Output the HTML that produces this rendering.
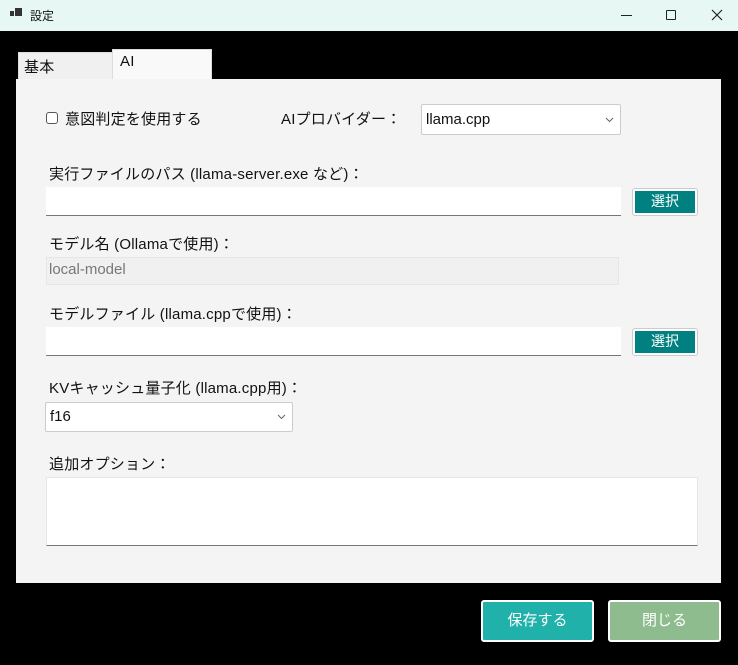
<!DOCTYPE html>
<html><head><meta charset="utf-8"><style>
*{margin:0;padding:0;box-sizing:border-box}
body{width:738px;height:665px;background:#000;position:relative;overflow:hidden;font-family:"Liberation Sans","Noto Sans CJK JP",sans-serif;color:#111}
.a{position:absolute;white-space:nowrap}
.t{font-size:15px;letter-spacing:0.2px}
.in{position:absolute;background:#fff;border-bottom:1px solid #777}
.btn{position:absolute;background:#008080;color:#fff;font-size:14px;text-align:center;border:2px solid #fff;box-shadow:0 0 0 1px #ccc;border-radius:2px;line-height:20px}
.cb{position:absolute;background:#fff;border:1px solid #ccc;border-radius:2px;font-size:15px;padding-left:4px}
.cb svg{position:absolute;right:6px;top:50%;margin-top:-3px}
</style></head><body>
<div class="a" style="left:0;top:0;width:738px;height:31px;background:#e6f7f4"></div>
<div class="a" style="left:10px;top:11px;width:4px;height:5px;background:#333"></div>
<div class="a" style="left:15px;top:8px;width:7px;height:8px;background:#333"></div>
<div class="a" style="left:30px;top:7px;font-size:12px">設定</div>
<div class="a" style="left:621px;top:15px;width:11px;height:1px;background:#222"></div>
<div class="a" style="left:666px;top:10px;width:10px;height:10px;border:1px solid #222;border-radius:1px"></div>
<svg class="a" style="left:711px;top:9px" width="12" height="12"><path d="M1 1L11 11M11 1L1 11" stroke="#222" stroke-width="1.2"/></svg>

<div class="a" style="left:18px;top:52px;width:95px;height:28px;background:#f0f0f0;border:1px solid #ddd"></div>
<div class="a t" style="left:24px;top:56px">基本</div>
<div class="a" style="left:112px;top:49px;width:100px;height:31px;background:#f9f9f9;border:1px solid #ddd;border-bottom:none"></div>
<div class="a t" style="left:120px;top:53px">AI</div>
<div class="a" style="left:16px;top:79px;width:705px;height:504px;background:#f4f4f4"></div>

<div class="a" style="left:46px;top:112px;width:12px;height:12px;border:1px solid #555;border-radius:3px;background:#fff"></div>
<div class="a t" style="left:65px;top:108px">意図判定を使用する</div>
<div class="a t" style="left:281px;top:108px">AIプロバイダー：</div>
<div class="cb" style="left:421px;top:104px;width:200px;height:31px;line-height:29px">llama.cpp<svg width="9" height="6"><path d="M1 1L4.5 4.5L8 1" stroke="#666" fill="none"/></svg></div>

<div class="a t" style="left:49px;top:163px">実行ファイルのパス (llama-server.exe など)：</div>
<div class="in" style="left:46px;top:187px;width:575px;height:29px"></div>
<div class="btn" style="left:633px;top:189px;width:64px;height:26px">選択</div>

<div class="a t" style="left:49px;top:233px">モデル名 (Ollamaで使用)：</div>
<div class="a" style="left:46px;top:257px;width:573px;height:28px;background:#f0f0f0;border:1px solid #e6e6e6;font-size:15px;color:#777;padding:3px 0 0 2px">local-model</div>

<div class="a t" style="left:49px;top:303px">モデルファイル (llama.cppで使用)：</div>
<div class="in" style="left:46px;top:327px;width:575px;height:29px"></div>
<div class="btn" style="left:633px;top:329px;width:64px;height:26px">選択</div>

<div class="a t" style="left:49px;top:377px">KVキャッシュ量子化 (llama.cpp用)：</div>
<div class="cb" style="left:45px;top:402px;width:248px;height:30px;line-height:28px">f16<svg width="9" height="6"><path d="M1 1L4.5 4.5L8 1" stroke="#666" fill="none"/></svg></div>

<div class="a t" style="left:49px;top:453px">追加オプション：</div>
<div class="in" style="left:46px;top:477px;width:652px;height:69px;border-top:1px solid #e6e6e6;border-left:1px solid #e6e6e6;border-right:1px solid #e6e6e6"></div>

<div class="btn" style="left:481px;top:600px;width:113px;height:42px;line-height:38px;background:#20b2aa;border-radius:3px;box-shadow:none;font-size:15px">保存する</div>
<div class="btn" style="left:608px;top:600px;width:113px;height:42px;line-height:38px;background:#8fbc8f;border-radius:3px;box-shadow:none;font-size:15px">閉じる</div>
</body></html>
